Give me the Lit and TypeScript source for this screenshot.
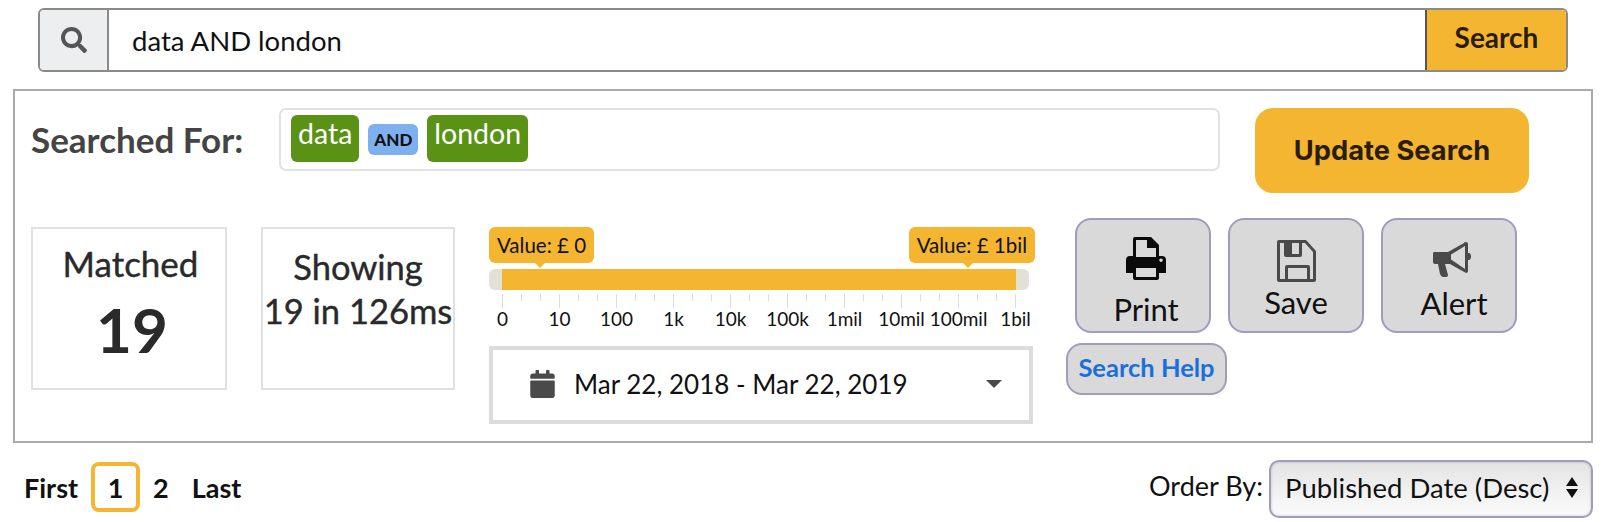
import { LitElement, html, css } from "lit";
import { customElement } from "lit/decorators.js";

const labels = ["0", "10", "100", "1k", "10k", "100k", "1mil", "10mil", "100mil", "1bil"];
const ticks = Array.from({ length: 28 }, (_, i) => i);

@customElement("app-root")
export class AppRoot extends LitElement {
  static styles = css`
    :host { display: block; width: 1608px; height: 522px; overflow: hidden; background: #fff; font-family: "Lato", "Open Sans", sans-serif; color: #111; box-sizing: border-box; padding: 8px 15px 0 13px; }
    * { box-sizing: border-box; }
    svg { display: block; }
    .bar { display: flex; height: 64px; margin: 0 25px 17px 25px; border: 2px solid #8a8a8a; border-radius: 6px; overflow: hidden; }
    .icon-cell { width: 69px; background: #eceef0; border-right: 2px solid #8a8a8a; display: flex; align-items: center; justify-content: center; }
    .query { flex: 1; font-size: 27.5px; display: flex; align-items: center; padding-left: 23px; }
    .go { width: 141px; background: #f4b531; border-left: 2px solid #555; display: flex; align-items: center; justify-content: center; font-size: 28px; font-weight: 700; color: #2b1d05; padding-bottom: 6px; }
    .panel { height: 354px; width: 1580px; border: 2px solid #aaa; padding: 17px 16px 0 16px; }
    .row1 { display: flex; height: 85px; }
    .sf { width: 248px; font-size: 35px; font-weight: 700; color: #444; padding-top: 10px; white-space: nowrap; }
    .tagbox { width: 941px; height: 63px; border: 2px solid #e2e2e2; border-radius: 7px; padding: 5px 10px; display: flex; align-items: flex-start; gap: 9px; }
    .tag { height: 47px; background: #5a9216; color: #fff; border-radius: 6px; font-size: 28.5px; padding: 0 7px; line-height: 37px; }
    .andtag { margin-top: 9px; height: 31px; width: 50px; background: #7eb0f0; border-radius: 6px; font-size: 17px; font-weight: 900; color: #111; display: flex; align-items: center; justify-content: center; }
    .update { margin-left: 35px; width: 274px; height: 85px; background: #f4b531; border-radius: 18px; display: flex; align-items: center; justify-content: center; font-family: "Inter", sans-serif; font-weight: 700; font-size: 27.3px; color: #2b1d05; }
    .row2 { display: flex; margin-top: 34px; }
    .stat { height: 163px; border: 2px solid #e0e0e0; text-align: center; color: #2a2a2a; -webkit-text-stroke: 0.4px #2a2a2a; }
    .matched { width: 196px; margin-right: 34px; font-size: 35px; padding: 12px 0 0 3px; line-height: 44px; }
    .matched b { display: block; font-size: 62px; font-weight: 700; line-height: 76px; margin-top: 6px; padding-left: 3px; -webkit-text-stroke: 0; }
    .showing { width: 194px; margin-right: 34px; font-size: 34.5px; padding-top: 16px; line-height: 44px; white-space: nowrap; }
    .mid { width: 544px; margin-right: 35px; }
    .tips { display: flex; justify-content: space-between; height: 36px; width: 546px; }
    .tip { position: relative; height: 36px; background: #f4b531; border-radius: 6px; font-size: 20.5px; display: flex; align-items: center; padding: 0 8px; color: #111; }
    .tip::after { content: ""; position: absolute; bottom: -5px; border: 5px solid transparent; border-bottom: 0; border-top-color: #f4b531; }
    .tip.l::after { left: 46px; }
    .tip.r::after { right: 62px; }
    .track { margin-top: 6px; height: 21px; width: 540px; background: #e3e0d6; border-radius: 6px; padding: 0 13px; }
    .fill { height: 100%; background: #f4b531; }
    .ticks { display: flex; justify-content: space-between; margin: 4px 13px 0; height: 14px; width: 514px; }
    .t { width: 1px; height: 7px; background: #dcdcdc; }
    .t.big { height: 14px; }
    .labels { height: 22px; margin: -1px 13px 0; width: 514px; font-size: 19px; color: #111; display: flex; justify-content: space-between; }
    .labels span { width: 1px; display: flex; justify-content: center; white-space: nowrap; }
    .date { margin-top: 17px; height: 78px; width: 544px; border: 4px solid #dcdcdc; display: flex; align-items: center; padding: 0 0 2px 37px; font-size: 26px; color: #111; }
    .date .txt { margin-left: 19px; flex: 1; }
    .caret { width: 0; height: 0; border: 8px solid transparent; border-bottom: 0; border-top: 8px solid #4a4a4a; margin-right: 27px; }
    .actions { width: 480px; }
    .btns { display: flex; gap: 17px; margin-left: 7px; margin-top: -9px; }
    .btn { width: 136px; height: 115px; background: #d9d9d9; border: 2px solid #a09cc0; border-radius: 16px; display: flex; flex-direction: column; align-items: center; font-size: 31px; line-height: 37px; color: #111; }
    .btn.shift { padding-left: 6px; }
    .btn svg { flex: none; }
    .i-print { margin-top: 17px; margin-bottom: 11px; }
    .i-save { margin-top: 20px; margin-bottom: 2px; }
    .i-alert { margin-top: 22px; margin-bottom: 7px; }
    .alert-label { margin-left: 4px; }
    .help { margin: 10px 0 0 -2px; width: 161px; height: 52px; background: #d9d9d9; border: 2px solid #a09cc0; border-radius: 16px; display: flex; align-items: center; justify-content: center; padding-bottom: 5px; font-size: 25.5px; font-weight: 700; color: #1a6fdb; }
    .bottom { display: flex; justify-content: space-between; align-items: center; height: 58px; margin-top: 17px; width: 1580px; }
    .pager { display: flex; align-items: center; font-size: 27px; font-weight: 700; color: #111; padding: 0 0 4px 11px; }
    .cur { width: 49px; height: 50px; border: 4px solid #f4b531; border-radius: 8px; display: flex; align-items: center; justify-content: center; margin: 0 13px 0 13px; }
    .last { margin-left: 23px; }
    .order { display: flex; align-items: center; gap: 6px; font-size: 27px; color: #111; }
    .order > span { padding-bottom: 7px; }
    .select { width: 324px; height: 58px; border: 2px solid #a09cc0; border-radius: 10px; background: linear-gradient(#e4e4e4, #fbfbfb); display: flex; align-items: center; justify-content: space-between; padding: 0 13px 3px 14px; box-shadow: inset 0 0 3px rgba(0,0,0,.2); font-size: 27.5px; white-space: nowrap; }
    .arrows { display: flex; flex-direction: column; gap: 3px; }
    .arrows i { display: block; width: 0; height: 0; border: 6px solid transparent; }
    .arrows i:first-child { border-top: 0; border-bottom: 9px solid #111; }
    .arrows i:last-child { border-bottom: 0; border-top: 9px solid #111; }
  `;

  render() {
    return html`
      <div class="bar">
        <div class="icon-cell">
          <svg width="26" height="26" viewBox="0 0 512 512" fill="#555"><path d="M505 442.7L405.3 343c-4.5-4.5-10.6-7-17-7H372c27.6-35.3 44-79.7 44-128C416 93.1 322.9 0 208 0S0 93.1 0 208s93.1 208 208 208c48.3 0 92.7-16.4 128-44v16.3c0 6.4 2.5 12.5 7 17l99.7 99.7c9.4 9.4 24.6 9.4 33.9 0l28.3-28.3c9.4-9.4 9.4-24.6.1-34zM208 336c-70.7 0-128-57.2-128-128 0-70.7 57.2-128 128-128 70.7 0 128 57.2 128 128 0 70.7-57.2 128-128 128z"/></svg>
        </div>
        <div class="query">data AND london</div>
        <div class="go">Search</div>
      </div>
      <div class="panel">
        <div class="row1">
          <div class="sf">Searched For:</div>
          <div class="tagbox">
            <span class="tag">data</span><span class="andtag">AND</span><span class="tag">london</span>
          </div>
          <div class="update">Update Search</div>
        </div>
        <div class="row2">
          <div class="stat matched">Matched<b>19</b></div>
          <div class="stat showing">Showing<br />19 in 126ms</div>
          <div class="mid">
            <div class="tips"><span class="tip l">Value: £ 0</span><span class="tip r">Value: £ 1bil</span></div>
            <div class="track"><div class="fill"></div></div>
            <div class="ticks">${ticks.map((i) => html`<span class="t ${i % 3 === 0 ? "big" : ""}"></span>`)}</div>
            <div class="labels">${labels.map((l) => html`<span>${l}</span>`)}</div>
            <div class="date">
              <svg width="25" height="28" viewBox="0 0 448 512" fill="#4a4a4a"><path d="M12 192h424c6.6 0 12 5.4 12 12v260c0 26.5-21.5 48-48 48H48c-26.5 0-48-21.5-48-48V204c0-6.6 5.4-12 12-12zm436-44v-36c0-26.5-21.5-48-48-48h-48V12c0-6.6-5.4-12-12-12h-40c-6.6 0-12 5.4-12 12v52H160V12c0-6.6-5.4-12-12-12h-40c-6.6 0-12 5.4-12 12v52H48C21.5 64 0 85.5 0 112v36c0 6.6 5.4 12 12 12h424c6.6 0 12-5.4 12-12z"/></svg>
              <span class="txt">Mar 22, 2018 - Mar 22, 2019</span>
              <span class="caret"></span>
            </div>
          </div>
          <div class="actions">
            <div class="btns">
              <div class="btn shift">
                <svg class="i-print" width="40" height="43" viewBox="0 0 40 43" fill="#0a0a0a"><path fill-rule="evenodd" d="M7 2a2 2 0 0 1 2-2h16l8 8v11h3a4 4 0 0 1 4 4v13h-7v5a2 2 0 0 1-2 2H9a2 2 0 0 1-2-2v-5H0V23a4 4 0 0 1 4-4h3zM10 3v17h20V11h-9V3zM10 31v9h20v-9zM35 21.5a1.7 1.7 0 1 0 .01 0z"/></svg>
                <span>Print</span>
              </div>
              <div class="btn">
                <svg class="i-save" width="39" height="42" viewBox="0 0 39 42" fill="#4a4a4a"><path fill-rule="evenodd" d="M2 0h27l10 11v29a2 2 0 0 1-2 2H2a2 2 0 0 1-2-2V2a2 2 0 0 1 2-2zM3 3v36h5V27a2 2 0 0 1 2-2h21a2 2 0 0 1 2 2v12h3V12l-8-9h-3v12a2 2 0 0 1-2 2H9a2 2 0 0 1-2-2V3zM15 3v11h7V3zM11 28v11h19V28z"/></svg>
                <span>Save</span>
              </div>
              <div class="btn shift">
                <svg class="i-alert" width="38" height="36" viewBox="0 0 38 36" fill="#4a4a4a"><path fill-rule="evenodd" d="M1 10h14L31 1a2 2 0 0 1 2-1q2 0 2 2v9h1.5q1.5 1 1.5 3.5t-1.5 3.5H35v11q0 2-2 2L17 22h-5l3 11q0 2-2 2h-3q-2 0-3-3L5 22H2q-2 0-2-2v-8q0-2 1-2zM18 12.5v5L32 27V4z"/></svg>
                <span class="alert-label">Alert</span>
              </div>
            </div>
            <div class="help">Search Help</div>
          </div>
        </div>
      </div>
      <div class="bottom">
        <div class="pager"><span>First</span><span class="cur">1</span><span>2</span><span class="last">Last</span></div>
        <div class="order"><span>Order By:</span><div class="select"><span>Published Date (Desc)</span><span class="arrows"><i></i><i></i></span></div></div>
      </div>
    `;
  }
}
